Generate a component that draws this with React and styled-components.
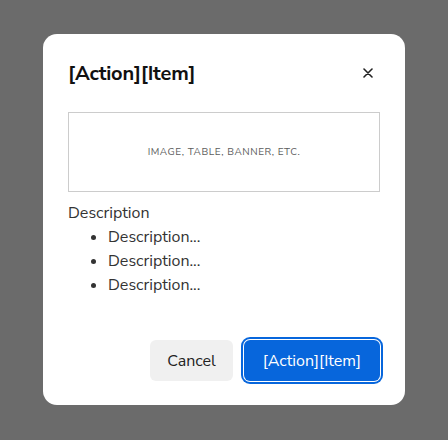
import React from "react";
import styled, { createGlobalStyle } from "styled-components";

const GlobalStyle = createGlobalStyle`
  html, body {
    margin: 0;
    padding: 0;
    background: #6b6b6b;
    font-family: "Nunito Sans", Lato, "Noto Sans", sans-serif;
  }
`;

const Backdrop = styled.div`
  width: 448px;
  height: 440px;
  background: #6b6b6b;
  padding: 34px 0 0 43px;
  box-sizing: border-box;
`;

const Modal = styled.div`
  width: 362px;
  height: 371px;
  box-sizing: border-box;
  background: #fff;
  border-radius: 14px;
  padding: 24px 25px 24px 25px;
  display: flex;
  flex-direction: column;
`;

const Header = styled.div`
  display: flex;
  align-items: center;
  justify-content: space-between;
  height: 30px;
`;

const Title = styled.h2`
  margin: 0;
  font-size: 20px;
  font-weight: 700;
  color: #111;
  letter-spacing: -0.2px;
`;

const Close = styled.button`
  border: 0;
  background: none;
  padding: 0;
  width: 24px;
  height: 24px;
  display: flex;
  align-items: center;
  justify-content: center;
  cursor: pointer;
  color: #222;
`;

const Placeholder = styled.div`
  margin-top: 24px;
  height: 80px;
  border: 1px solid #cccccc;
  box-sizing: border-box;
  display: flex;
  align-items: center;
  justify-content: center;
  font-size: 10px;
  letter-spacing: 0.55px;
  color: #5c5c5c;
  text-transform: uppercase;
`;

const Body = styled.div`
  margin-top: 9px;
  font-size: 16px;
  line-height: 24px;
  color: #333;
`;

const List = styled.ul`
  margin: 0;
  padding-left: 40px;
`;

const Footer = styled.div`
  margin-top: auto;
  display: flex;
  justify-content: flex-end;
  gap: 11px;
`;

const Button = styled.button`
  height: 41px;
  padding: 0 ${(p) => (p.$primary ? "19px" : "17px")};
  border: 0;
  border-radius: 6px;
  font-family: inherit;
  font-size: 16px;
  cursor: pointer;
  background: ${(p) => (p.$primary ? "#0766dc" : "#f0f0f0")};
  color: ${(p) => (p.$primary ? "#fff" : "#222")};
  box-shadow: ${(p) =>
    p.$primary ? "0 0 0 1px #fff, 0 0 0 3px #0766dc" : "none"};
`;

export default function App() {
  return (
    <>
      <GlobalStyle />
      <Backdrop>
        <Modal>
          <Header>
            <Title>[Action][Item]</Title>
            <Close aria-label="Close">
              <svg width="10" height="10" viewBox="0 0 10 10">
                <path d="M1 1L9 9M9 1L1 9" stroke="currentColor" strokeWidth="1.6" strokeLinecap="round" />
              </svg>
            </Close>
          </Header>
          <Placeholder>Image, table, banner, etc.</Placeholder>
          <Body>
            Description
            <List>
              <li>Description...</li>
              <li>Description...</li>
              <li>Description...</li>
            </List>
          </Body>
          <Footer>
            <Button>Cancel</Button>
            <Button $primary>[Action][Item]</Button>
          </Footer>
        </Modal>
      </Backdrop>
    </>
  );
}
